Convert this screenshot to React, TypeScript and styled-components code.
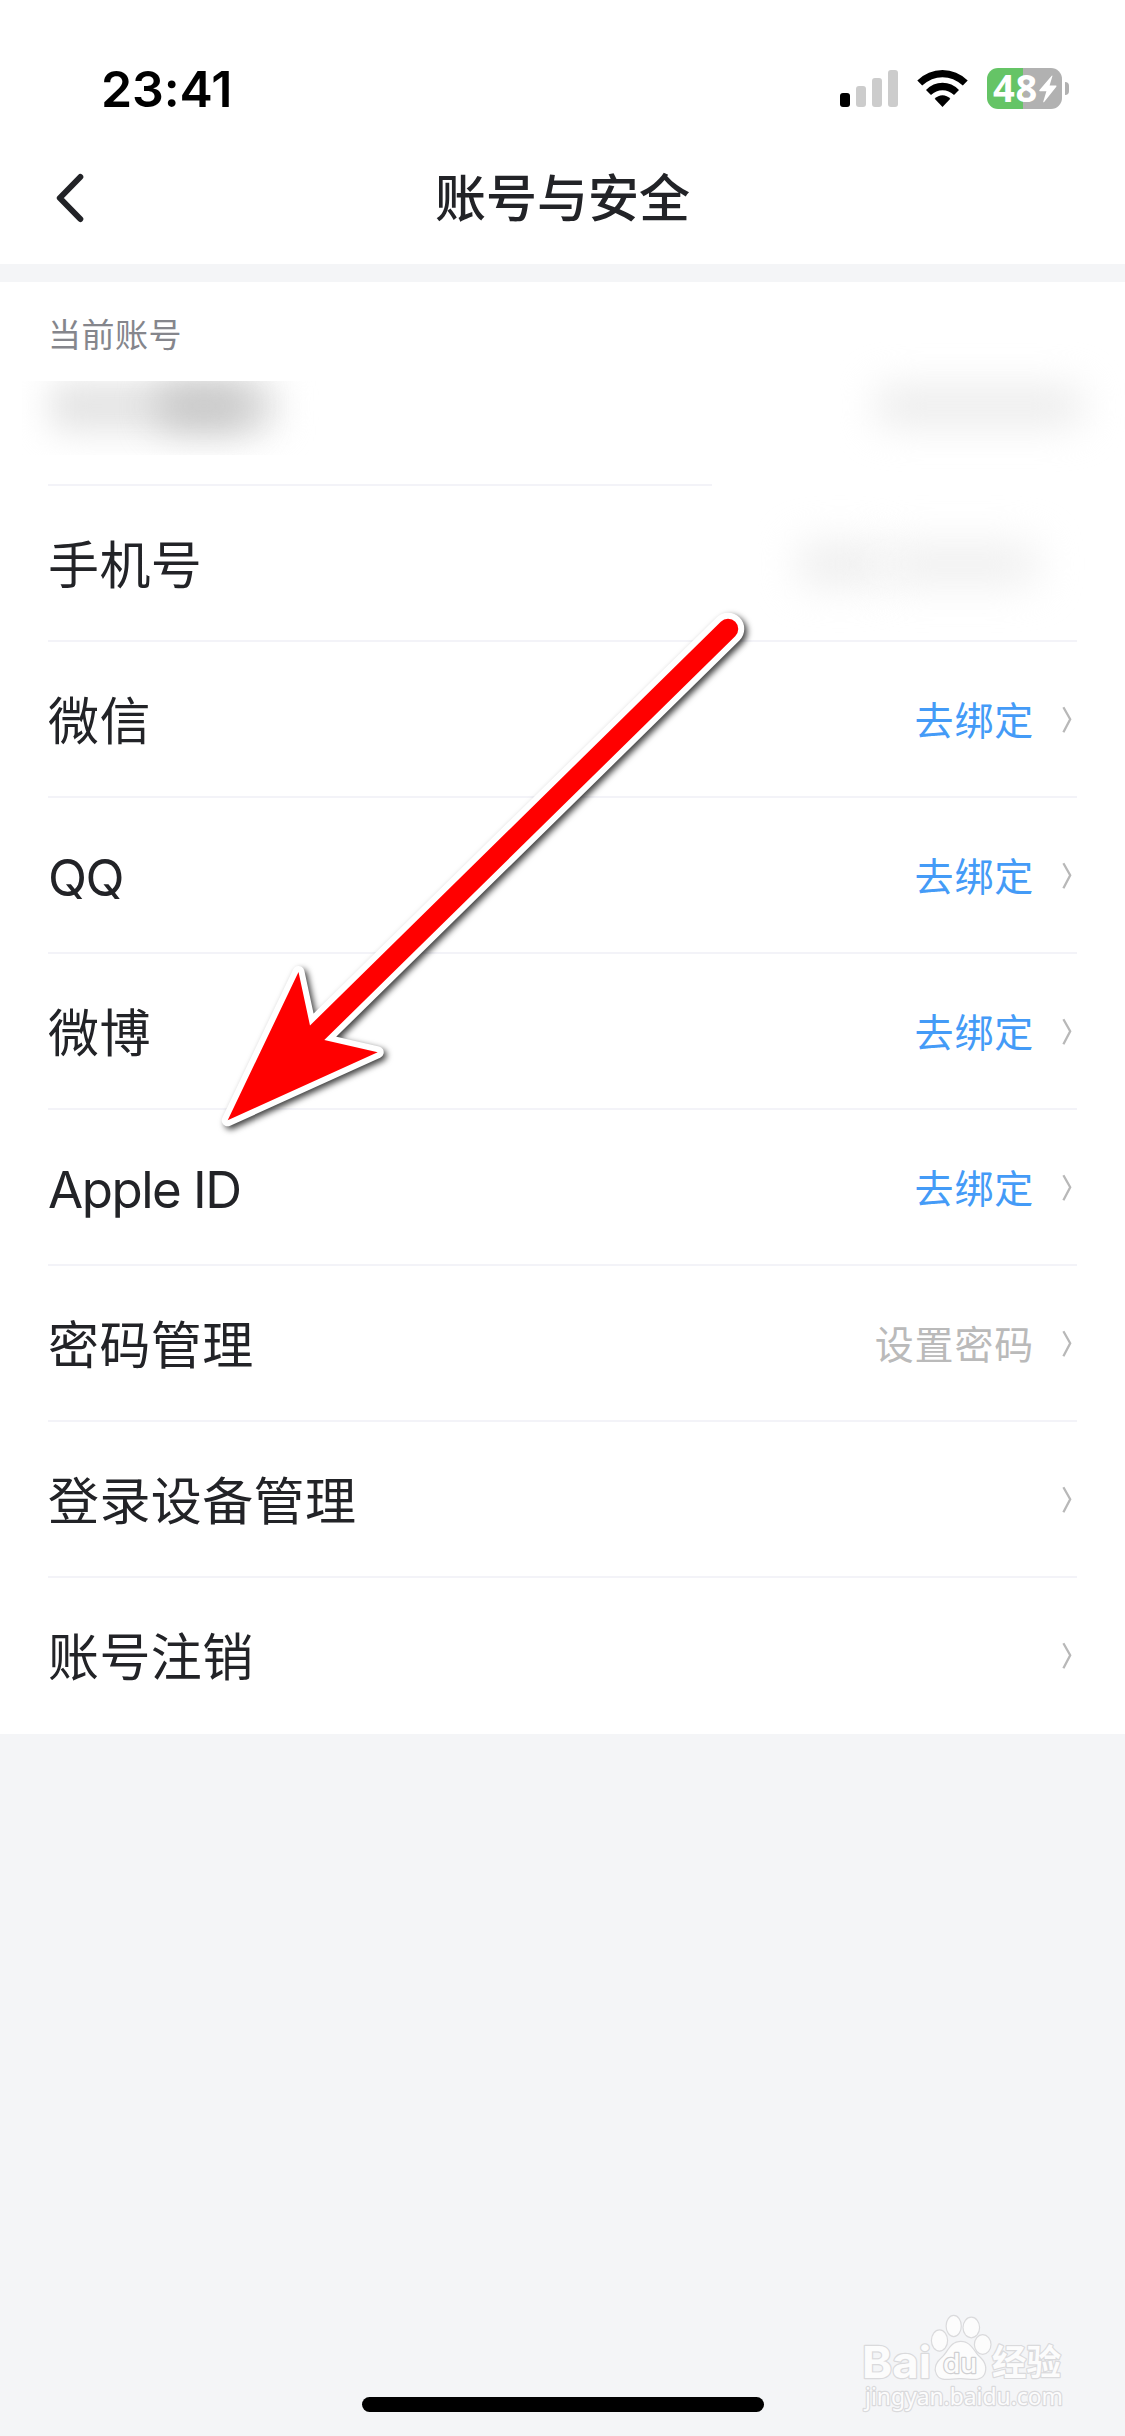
import React from "react";
import styled, { createGlobalStyle } from "styled-components";

const cjk = `"Noto Sans CJK SC", sans-serif`;

const GlobalStyle = createGlobalStyle`
  * { box-sizing: border-box; }
  body { margin: 0; background: #f4f5f7; }
`;

const Screen = styled.div`
  position: relative;
  display: flex;
  flex-direction: column;
  width: 1125px;
  height: 2436px;
  overflow: hidden;
  background: #f4f5f7;
  font-family: Inter, ${cjk};
  color: #222327;
`;

const StatusBar = styled.header`
  display: flex;
  justify-content: space-between;
  align-items: center;
  height: 132px;
  padding: 45px 56px 0 101px;
  background: #fff;
`;

const Time = styled.span`
  font: 600 50px/60px Inter, sans-serif;
  letter-spacing: -0.1px;
  color: #000;
`;

const StatusIcons = styled.div`
  display: flex;
  align-items: center;
  gap: 19px;
`;

const Battery = styled.div`
  display: flex;
  align-items: center;
  gap: 3px;
`;

const BatteryBody = styled.div`
  display: flex;
  align-items: center;
  width: 75px;
  height: 41px;
  padding-left: 6px;
  border-radius: 11px;
  background: linear-gradient(90deg, #65c466 36px, #b1b1b1 36px);
  color: #fff;
  font: 700 38px/39px "Open Sans", sans-serif;
`;

const BatteryLevel = styled.span`
  margin-top: -2px;
  letter-spacing: 0.8px;
`;

const BatteryCap = styled.div`
  width: 4px;
  height: 13px;
  border-radius: 0 4px 4px 0;
  background: #b1b1b1;
`;

const NavBar = styled.nav`
  display: grid;
  grid-template-columns: 200px 1fr 200px;
  align-items: center;
  height: 132px;
  background: #fff;
`;

const BackButton = styled.button`
  display: flex;
  width: 100px;
  margin: 0;
  padding: 0 0 0 53px;
  border: 0;
  background: none;
`;

const Title = styled.h1`
  margin: 0;
  padding-bottom: 6px;
  text-align: center;
  font: 500 51px/72px ${cjk};
`;

const Panel = styled.main`
  margin-top: 18px;
  background: #fff;
`;

const AccountBlock = styled.section`
  position: relative;
  height: 204px;
  padding: 27px 48px 0 48px;
`;

const Caption = styled.h2`
  margin: 0;
  font: 400 33px/48px ${cjk};
  letter-spacing: 0.5px;
  color: #85868c;
`;

const ShortRule = styled.div`
  position: absolute;
  left: 48px;
  bottom: 0;
  width: 664px;
  height: 2px;
  background: #f3f3f8;
`;

const Redaction = styled.div<{ $x: number; $y: number; $w: number; $h: number }>`
  position: absolute;
  left: ${(p) => p.$x}px;
  top: ${(p) => p.$y}px;
  width: ${(p) => p.$w}px;
  height: ${(p) => p.$h}px;
  overflow: hidden;
`;

const Smudge = styled.div<{ $x: number; $y: number; $w: number; $h: number; $tone: string; $blur: number }>`
  position: absolute;
  left: ${(p) => p.$x}px;
  top: ${(p) => p.$y}px;
  width: ${(p) => p.$w}px;
  height: ${(p) => p.$h}px;
  border-radius: 14px;
  background: ${(p) => p.$tone};
  filter: blur(${(p) => p.$blur}px);
`;

const List = styled.ul`
  margin: 0;
  padding: 0 48px;
  list-style: none;
`;

const Row = styled.li`
  position: relative;
  display: flex;
  align-items: center;
  height: 156px;
  padding: 2px 5px 0 0;
  border-bottom: 2px solid #f3f3f8;
  &:last-child { border-bottom-color: transparent; }
`;

const Label = styled.span`
  flex: 1;
  padding-top: 4px;
  font: 400 51px/72px Inter, ${cjk};
  letter-spacing: 0.4px;
`;

const Latin = styled.span`
  letter-spacing: -1.5px;
`;

const Value = styled.span<{ $link?: boolean }>`
  margin-right: 28px;
  padding-bottom: 5px;
  font: 400 39px/56px ${cjk};
  letter-spacing: 0.8px;
  color: ${(p) => (p.$link ? "#449bf7" : "#bababa")};
`;

const ArrowOverlay = styled.svg`
  position: absolute;
  left: 200px;
  top: 590px;
  filter: drop-shadow(3px 3px 3px rgba(0, 0, 0, 0.75));
`;

const HomeIndicator = styled.div`
  width: 402px;
  height: 15px;
  margin: auto auto 24px;
  border-radius: 8px;
  background: #000;
`;

const Watermark = styled.svg`
  position: absolute;
  left: 855px;
  top: 2305px;
`;

const Signal = () => (
  <svg width="58" height="37" viewBox="0 0 58 37">
    <rect x="0" y="23" width="10" height="14" rx="3" fill="#000" />
    <rect x="16" y="16" width="10" height="21" rx="3" fill="#ccc" />
    <rect x="32" y="8" width="10" height="29" rx="3" fill="#ccc" />
    <rect x="48" y="0" width="10" height="37" rx="3" fill="#ccc" />
  </svg>
);

const Wifi = () => (
  <svg width="51" height="37" viewBox="0 0 51 37">
    <path d="M0.3 10.6 Q11 0 25.5 0 T50.7 10.6 L45.8 15.6 Q36.5 7.3 25.5 7.3 T5.2 15.6Z" />
    <path d="M9 20 Q16 12.8 25.5 12.8 T42 20 L37 25 Q32 20.2 25.5 20.2 T14 25Z" />
    <path d="M17.7 28.8 Q21 25.3 25.5 25.3 T33.3 28.8 L25.5 37Z" />
  </svg>
);

const Bolt = () => (
  <svg width="20" height="28" viewBox="0 0 20 28" fill="#fff">
    <path d="M13.7 0.8 Q14.7 0.2 14.3 1.5 L11.6 10.6 L17.8 10.6 Q19 10.7 18.3 11.8 L6.2 26.9 Q5 27.9 5.3 26.4 L8.4 16.2 L1.9 16.2 Q0.7 16 1.5 14.9Z" />
  </svg>
);

const Chevron = () => (
  <svg width="10" height="28" viewBox="0 0 10 28" fill="none" stroke="#b8b8b8" strokeWidth="2.3">
    <path d="M1.4 1.2 L8.2 13.3 L1.4 26.2" />
  </svg>
);

const rows: { label: string; latin?: boolean; value?: string; link?: boolean }[] = [
  { label: "微信", value: "去绑定", link: true },
  { label: "QQ", latin: true, value: "去绑定", link: true },
  { label: "微博", value: "去绑定", link: true },
  { label: "Apple ID", latin: true, value: "去绑定", link: true },
  { label: "密码管理", value: "设置密码" },
  { label: "登录设备管理" },
  { label: "账号注销" },
];

const arrowShape =
  "M227.7 1120.3 L298.5 972 L310 1025.5 L720.8 621.7 A10.2 10.2 0 0 1 735.2 636.3 L324.3 1040 L377.7 1052.3Z";

export default function App() {
  return (
    <Screen>
      <GlobalStyle />
      <StatusBar>
        <Time>23:41</Time>
        <StatusIcons>
          <Signal />
          <Wifi />
          <Battery>
            <BatteryBody>
              <BatteryLevel>48</BatteryLevel>
              <Bolt />
            </BatteryBody>
            <BatteryCap />
          </Battery>
        </StatusIcons>
      </StatusBar>
      <NavBar>
        <BackButton aria-label="返回">
          <svg width="32" height="50" viewBox="0 0 32 50" fill="none" stroke="#222327" strokeWidth="6" strokeLinecap="round" strokeLinejoin="round">
            <path d="M27.3 4 L6.8 25 L27.3 46" />
          </svg>
        </BackButton>
        <Title>账号与安全</Title>
      </NavBar>
      <Panel>
        <AccountBlock>
          <Caption>当前账号</Caption>
          <Redaction $x={22} $y={99} $w={300} $h={74}>
            <Smudge $x={28} $y={0} $w={228} $h={50} $tone="#e4e4e4" $blur={17} />
            <Smudge $x={135} $y={2} $w={94} $h={46} $tone="#c8c8c8" $blur={18} />
          </Redaction>
          <Redaction $x={840} $y={60} $w={285} $h={130}>
            <Smudge $x={36} $y={44} $w={206} $h={40} $tone="#ececec" $blur={19} />
          </Redaction>
          <ShortRule />
        </AccountBlock>
        <List>
          <Row>
            <Label>手机号</Label>
            <Redaction $x={710} $y={4} $w={367} $h={146}>
              <Smudge $x={40} $y={54} $w={84} $h={40} $tone="#ededed" $blur={20} />
              <Smudge $x={124} $y={54} $w={156} $h={40} $tone="#efefef" $blur={20} />
            </Redaction>
          </Row>
          {rows.map((r) => (
            <Row key={r.label}>
              <Label>{r.latin ? <Latin>{r.label}</Latin> : r.label}</Label>
              {r.value && <Value $link={r.link}>{r.value}</Value>}
              <Chevron />
            </Row>
          ))}
        </List>
      </Panel>
      <HomeIndicator />
      <ArrowOverlay width="570" height="560" viewBox="200 590 570 560">
        <path d={arrowShape} fill="#fff" stroke="#fff" strokeWidth="12" strokeLinejoin="round" />
        <path d={arrowShape} fill="#f00" />
      </ArrowOverlay>
      <Watermark width="220" height="115" viewBox="855 2305 220 115">
        <g fill="#fcfcfc" stroke="#dadadc" strokeWidth="2.4" paintOrder="stroke" strokeLinejoin="round">
          <text x="862" y="2377.500" fontFamily="Inter, sans-serif" fontWeight="700" fontSize="44" textLength="69" lengthAdjust="spacingAndGlyphs">Bai</text>
          <ellipse cx="939.5" cy="2340.5" rx="7.5" ry="10" />
          <ellipse cx="953.7" cy="2326" rx="7" ry="10" />
          <ellipse cx="971.3" cy="2327.5" rx="7.7" ry="9.7" />
          <ellipse cx="982.7" cy="2344.5" rx="7.7" ry="9.3" />
          <path d="M960.5 2342 C951 2342 949 2351 943 2357 C937 2362 934 2368 937 2374 C941 2382 950 2377.500 961 2378 C972 2378.500 980 2381 984 2374 C987 2367 984 2361 978 2356 C973 2350 970 2342 960.5 2342Z" />
          <text x="943" y="2373" fontFamily="Inter, sans-serif" fontWeight="500" fontSize="27" textLength="34" lengthAdjust="spacingAndGlyphs" stroke="#cfcfd1">du</text>
          <text x="992" y="2375" fontFamily='"Noto Sans CJK SC", sans-serif' fontWeight="700" fontSize="35" textLength="69" lengthAdjust="spacingAndGlyphs">经验</text>
          <text x="865" y="2404.500" fontFamily='"Noto Sans", sans-serif' fontWeight="400" fontSize="23" textLength="198" lengthAdjust="spacingAndGlyphs">jingyan.baidu.com</text>
        </g>
      </Watermark>
    </Screen>
  );
}
